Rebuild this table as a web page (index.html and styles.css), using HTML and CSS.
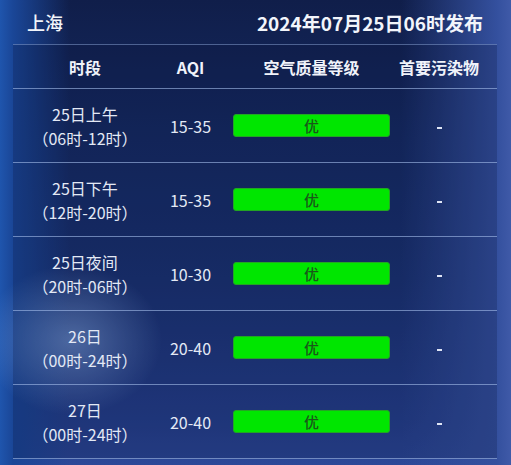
FILE: index.html
```html
<!DOCTYPE html>
<html lang="zh-CN">
<head>
<meta charset="utf-8">
<link rel="stylesheet" href="styles.css">
</head>
<body>
<div class="page">
  <div class="top">
    <span class="city">上海</span>
    <span class="date">2024年07月25日06时发布</span>
  </div>
  <div class="table">
    <div class="row head">
      <div class="c1">时段</div>
      <div class="c2">AQI</div>
      <div class="c3">空气质量等级</div>
      <div class="c4">首要污染物</div>
    </div>
    <div class="row">
      <div class="c1"><div>25日上午</div><div>（06时-12时）</div></div>
      <div class="c2">15-35</div>
      <div class="c3"><span class="badge">优</span></div>
      <div class="c4"><span class="dash"></span></div>
    </div>
    <div class="row">
      <div class="c1"><div>25日下午</div><div>（12时-20时）</div></div>
      <div class="c2">15-35</div>
      <div class="c3"><span class="badge">优</span></div>
      <div class="c4"><span class="dash"></span></div>
    </div>
    <div class="row">
      <div class="c1"><div>25日夜间</div><div>（20时-06时）</div></div>
      <div class="c2">10-30</div>
      <div class="c3"><span class="badge">优</span></div>
      <div class="c4"><span class="dash"></span></div>
    </div>
    <div class="row">
      <div class="c1"><div>26日</div><div>（00时-24时）</div></div>
      <div class="c2">20-40</div>
      <div class="c3"><span class="badge">优</span></div>
      <div class="c4"><span class="dash"></span></div>
    </div>
    <div class="row">
      <div class="c1"><div>27日</div><div>（00时-24时）</div></div>
      <div class="c2">20-40</div>
      <div class="c3"><span class="badge">优</span></div>
      <div class="c4"><span class="dash"></span></div>
    </div>
  </div>
</div>
</body>
</html>
```
FILE: styles.css
```css
html, body {
  margin: 0;
  padding: 0;
}
body {
  width: 511px;
  height: 465px;
  overflow: hidden;
  font-family: "Noto Sans CJK SC", "Noto Sans", sans-serif;
  color: #e3e9f5;
  background:
    radial-gradient(ellipse 90px 75px at 72px 340px, rgba(160,200,255,0.5), rgba(160,200,255,0) 100%),
    linear-gradient(90deg, #1f55ad 0px, #1a4697 13px, rgba(26,60,130,0) 70px),
    linear-gradient(270deg, #3f5aa8 0px, #34509e 14px, rgba(50,75,150,0) 110px),
    linear-gradient(180deg, #101e4a 0%, #152a62 30%, #1a3272 60%, #253f8c 90%, #2c4898 100%);
}
.page {
  padding: 0 14px 0 13px;
}
.top {
  height: 44px;
  display: flex;
  align-items: center;
  justify-content: space-between;
  padding: 0 14px;
  color: #f2f5fb;
}
.city {
  font-size: 18px;
  font-weight: 500;
}
.date {
  font-size: 19px;
  font-weight: 700;
}
.table {
  background: rgba(8, 18, 55, 0.22);
  border-top: 1px solid rgba(140, 165, 215, 0.5);
}
.row {
  display: grid;
  grid-template-columns: 144px 67px 175px 80px;
  padding-right: 18px;
  height: 74px;
  box-sizing: border-box;
  border-bottom: 1.5px solid rgba(165, 190, 235, 0.6);
  align-items: center;
  font-size: 16px;
  line-height: 24px;
}
.row.head {
  height: 44px;
  font-weight: 700;
  font-size: 16px;
  color: #f0f3fa;
}
.row > div {
  text-align: center;
}
.badge {
  display: block;
  width: 157px;
  height: 23px;
  margin: 0 0 0 9px;
  box-sizing: border-box;
  background: #00e600;
  border: 1px solid #23a523;
  border-radius: 3px;
  color: #1a561a;
  font-size: 15px;
  font-weight: 500;
  line-height: 21px;
  text-align: center;
}
.dash {
  display: inline-block;
  width: 5px;
  height: 2px;
  background: #dfe5f5;
  vertical-align: middle;
}
```
